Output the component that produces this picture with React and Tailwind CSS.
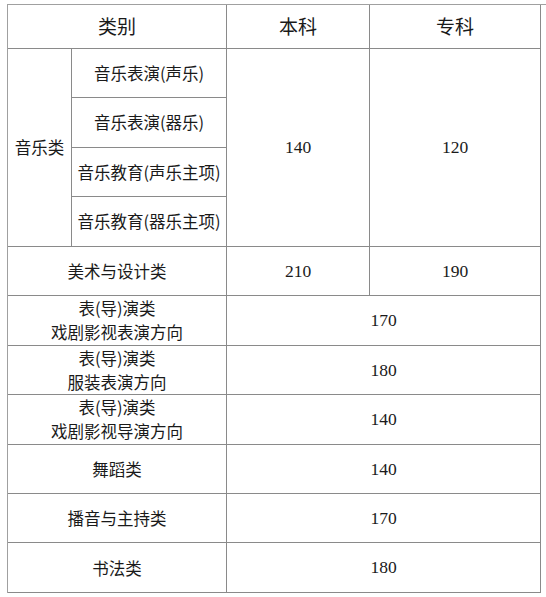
import React from 'react';

const cjk = { fontFamily: '"Noto Sans CJK SC", "Noto Sans", sans-serif' };
const serif = { fontFamily: '"Liberation Serif", "Noto Sans CJK SC", serif' };

const cell = 'flex items-center justify-center text-center border-r border-b border-[#8a8a8a] text-[#1a1a1a]';

const rows = [
  { label: ['表(导)演类', '戏剧影视表演方向'], value: '170' },
  { label: ['表(导)演类', '服装表演方向'], value: '180' },
  { label: ['表(导)演类', '戏剧影视导演方向'], value: '140' },
  { label: ['舞蹈类'], value: '140' },
  { label: ['播音与主持类'], value: '170' },
  { label: ['书法类'], value: '180' },
];

const music = ['音乐表演(声乐)', '音乐表演(器乐)', '音乐教育(声乐主项)', '音乐教育(器乐主项)'];

export default function App() {
  return (
    <div className="w-[546px] h-[597px] bg-white pt-[4px] pl-[7px]">
      <div
        className="grid grid-cols-[64px_155px_143px_171px] grid-rows-[44px_repeat(11,49.45px)] border-t border-l border-[#a0a0a0]"
        style={cjk}
      >
        <div className={`${cell} col-span-2 text-[19px]`}>类别</div>
        <div className={`${cell} text-[19px]`}>本科</div>
        <div className={`${cell} text-[19px]`}>专科</div>

        <div className={`${cell} row-span-4 text-[16.5px]`}>音乐类</div>
        <div className={`${cell} text-[16.5px]`}>{music[0]}</div>
        <div className={`${cell} row-span-4 text-[17.5px]`} style={serif}>140</div>
        <div className={`${cell} row-span-4 text-[17.5px]`} style={serif}>120</div>
        {music.slice(1).map(m => (
          <div key={m} className={`${cell} text-[16.5px]`}>{m}</div>
        ))}

        <div className={`${cell} col-span-2 text-[16.5px]`}>美术与设计类</div>
        <div className={`${cell} text-[17.5px]`} style={serif}>210</div>
        <div className={`${cell} text-[17.5px]`} style={serif}>190</div>

        {rows.map((r, i) => (
          <React.Fragment key={i}>
            <div className={`${cell} col-span-2 flex-col text-[16.5px] leading-[24px]`}>
              {r.label.map(l => <span key={l}>{l}</span>)}
            </div>
            <div className={`${cell} col-span-2 text-[17.5px]`} style={serif}>{r.value}</div>
          </React.Fragment>
        ))}
      </div>
    </div>
  );
}
